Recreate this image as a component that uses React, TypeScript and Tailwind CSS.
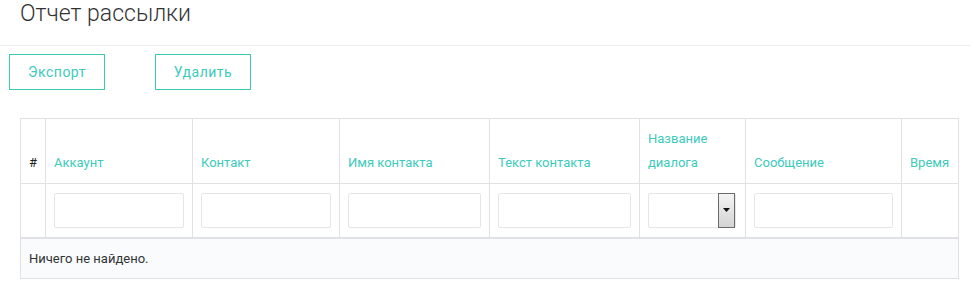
import React from "react";

const headers: { label: React.ReactNode; w: number }[] = [
  { label: "#", w: 25 },
  { label: "Аккаунт", w: 147 },
  { label: "Контакт", w: 147 },
  { label: "Имя контакта", w: 150 },
  { label: "Текст контакта", w: 150 },
  { label: (<>Название<br />диалога</>), w: 106 },
  { label: "Сообщение", w: 156 },
  { label: "Время", w: 57 },
];

function Input() {
  return <div className="h-[35px] w-full rounded-[2px] border border-[#e6e6e6] bg-white" />;
}

export default function App() {
  return (
    <div className="w-[971px] h-[302px] bg-white" style={{ fontFamily: "Roboto, 'Noto Sans', sans-serif" }}>
      <div className="h-[46px] border-b border-[#eeeeee] pl-[20px]">
        <h1 className="text-[23px] leading-[28px] font-light text-[#333]">Отчет рассылки</h1>
      </div>
      <div className="flex gap-[50px] pl-[9px] mt-[8px]">
        <button className="w-[96px] h-[36px] border border-[#3cc9b5] text-[#3dcbbb] text-[14px] tracking-[0.5px]">Экспорт</button>
        <button className="w-[96px] h-[36px] border border-[#3cc9b5] text-[#3dcbbb] text-[14px] tracking-[0.5px]">Удалить</button>
      </div>
      <div className="pl-[20px] mt-[28px]">
        <table className="border-collapse table-fixed w-[938px] text-[13px]">
          <colgroup>
            {headers.map((h, i) => (
              <col key={i} style={{ width: h.w }} />
            ))}
          </colgroup>
          <thead>
            <tr className="h-[65px]">
              {headers.map((h, i) => (
                <th
                  key={i}
                  className={`border border-[#e1e1e4] align-bottom text-left font-normal px-[8px] pt-[8px] pb-[8px] leading-[24px] ${i === 0 ? "text-[#222]" : "text-[#3ccbbb]"}`}
                >
                  {h.label}
                </th>
              ))}
            </tr>
            <tr className="h-[54px]">
              {headers.map((_, i) => (
                <td key={i} className="border border-[#e1e1e4] border-b-2 border-b-[#dfe1e5] px-[8px] align-middle">
                  {i === 0 || i === 7 ? null : i === 5 ? (
                    <div className="flex h-[35px] w-[88px] rounded-[2px] border border-[#e6e6e6] bg-white">
                      <div className="flex-1" />
                      <div className="w-[17px] h-[35px] -mt-[1px] border border-[#6b6b6b] bg-gradient-to-b from-[#f4f4f4] to-[#d4d4d4] flex items-center justify-center">
                        <svg width="7" height="4" viewBox="0 0 7 4"><path d="M0 0h7L3.5 4z" fill="#111" /></svg>
                      </div>
                    </div>
                  ) : (
                    <Input />
                  )}
                </td>
              ))}
            </tr>
          </thead>
          <tbody>
            <tr className="h-[41px] bg-[#fafbfd]">
              <td colSpan={8} className="border border-[#e1e1e4] px-[8px] text-[#333] text-[13px]">
                Ничего не найдено.
              </td>
            </tr>
          </tbody>
        </table>
      </div>
    </div>
  );
}
